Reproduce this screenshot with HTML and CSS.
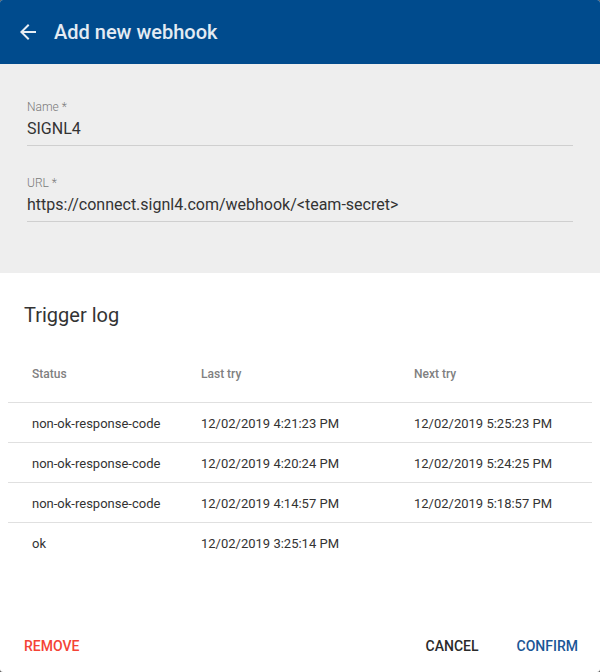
FILE: index.html
```html
<!DOCTYPE html>
<html>
<head>
<meta charset="utf-8">
<link rel="stylesheet" href="styles.css">
</head>
<body>
<div class="dialog">
  <header class="bar">
    <svg class="back" width="24" height="24" viewBox="0 0 24 24"><path d="M20 11H7.83l5.59-5.59L12 4l-8 8 8 8 1.41-1.41L7.83 13H20v-2z" fill="currentColor"/></svg>
    <h1 class="title">Add new webhook</h1>
  </header>
  <section class="form">
    <div class="field">
      <label class="label">Name *</label>
      <div class="value">SIGNL4</div>
    </div>
    <div class="field">
      <label class="label">URL *</label>
      <div class="value">https://connect.signl4.com/webhook/&lt;team-secret&gt;</div>
    </div>
  </section>
  <section class="log">
    <h2 class="log-title">Trigger log</h2>
    <table class="table">
      <thead>
        <tr><th class="c1">Status</th><th class="c2">Last try</th><th>Next try</th></tr>
      </thead>
      <tbody>
        <tr><td>non-ok-response-code</td><td>12/02/2019 4:21:23 PM</td><td>12/02/2019 5:25:23 PM</td></tr>
        <tr><td>non-ok-response-code</td><td>12/02/2019 4:20:24 PM</td><td>12/02/2019 5:24:25 PM</td></tr>
        <tr><td>non-ok-response-code</td><td>12/02/2019 4:14:57 PM</td><td>12/02/2019 5:18:57 PM</td></tr>
        <tr><td>ok</td><td>12/02/2019 3:25:14 PM</td><td></td></tr>
      </tbody>
    </table>
  </section>
  <footer class="actions">
    <button class="btn remove">REMOVE</button>
    <div class="right">
      <button class="btn cancel">CANCEL</button>
      <button class="btn confirm">CONFIRM</button>
    </div>
  </footer>
</div>
</body>
</html>
```
FILE: styles.css
```css
html, body {
  margin: 0;
  padding: 0;
  background: #5a5a5a;
}
body {
  font-family: Roboto, "Liberation Sans", sans-serif;
}
.dialog {
  width: 600px;
  height: 672px;
  background: #fff;
  border-radius: 3px;
  overflow: hidden;
  display: flex;
  flex-direction: column;
}
.bar {
  height: 64px;
  background: #004b8d;
  color: #e3ebf3;
  display: flex;
  align-items: center;
  padding: 0 16px;
  flex: none;
}
.back {
  width: 24px;
  height: 24px;
  margin-right: 14px;
  color: #e6edf4;
}
.title {
  margin: 0;
  font-size: 20px;
  font-weight: 500;
  letter-spacing: 0;
}
.form {
  background: #eeeeee;
  height: 209px;
  padding: 36px 27px 0;
  box-sizing: border-box;
  flex: none;
}
.field {
  border-bottom: 1px solid #cfcfcf;
  margin-bottom: 30px;
}
.label {
  display: block;
  font-size: 12px;
  font-weight: 300;
  color: #7a7a7a;
  line-height: 14px;
  margin-bottom: 5px;
}
.value {
  font-size: 16px;
  color: #333;
  line-height: 20px;
  padding-bottom: 6px;
}
.log {
  padding: 28px 8px 0;
  flex: 1;
}
.log-title {
  margin: 0 0 0 16px;
  font-size: 20px;
  font-weight: 400;
  color: #333;
  line-height: 28px;
}
.table {
  margin-top: 17px;
  width: 584px;
  border-collapse: collapse;
  font-size: 13px;
  color: #333;
}
.table th {
  text-align: left;
  font-size: 12px;
  font-weight: 500;
  color: #808080;
  height: 56px;
  padding: 0 0 0 24px;
  border-bottom: 1px solid #e0e0e0;
}
.table td {
  height: 37px;
  padding: 2px 0 0 24px;
  border-bottom: 1px solid #e0e0e0;
}
.table tr:last-child td {
  border-bottom: none;
}
.table .c1 { width: 145px; }
.table .c2 { width: 189px; }
.actions {
  height: 58px;
  display: flex;
  align-items: center;
  justify-content: space-between;
  padding: 6px 14px 0 16px;
  box-sizing: border-box;
  flex: none;
}
.right {
  display: flex;
  gap: 22px;
}
.btn {
  background: none;
  border: none;
  font-family: Roboto, "Liberation Sans", sans-serif;
  font-size: 14px;
  font-weight: 500;
  padding: 0 8px;
  line-height: 36px;
}
.remove { color: #f44336; }
.cancel { color: #2a2a2a; }
.confirm { color: #1a5696; }
```
